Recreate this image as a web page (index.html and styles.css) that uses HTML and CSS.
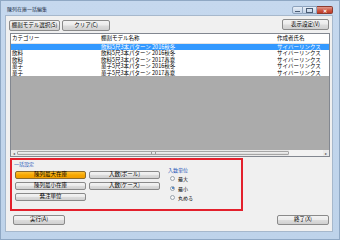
FILE: index.html
```html
<!DOCTYPE html>
<html lang="ja">
<head>
    <meta charset="UTF-8">
    <title>陳列在庫一括編集</title>
    <link rel="stylesheet" href="styles.css">
</head>
<body>
    <div class="window">
        <!-- タイトルバー -->
        <div class="titlebar">
            <span class="title">陳列在庫一括編集</span>
            <div class="caption-buttons">
                <span class="cap cap-min"><i></i></span>
                <span class="cap cap-max"><i></i></span>
                <span class="cap cap-close">✕</span>
            </div>
        </div>

        <div class="client">
            <!-- ツールバー -->
            <div class="toolbar">
                <button class="btn btn-model">棚割モデル選択(S)</button>
                <button class="btn btn-clear">クリア(C)</button>
                <button class="btn btn-view">表示設定(V)</button>
            </div>

            <!-- 一覧 -->
            <div class="grid">
                <div class="row head">
                    <span class="c1">カテゴリー</span>
                    <span class="c2">棚割モデル名称</span>
                    <span class="c3">作成者氏名</span>
                </div>
                <div class="row selected">
                    <span class="c1"></span>
                    <span class="c2">飲料5尺3本パターン 2016秋冬</span>
                    <span class="c3">サイバーリンクス</span>
                </div>
                <div class="row">
                    <span class="c1">飲料</span>
                    <span class="c2">飲料5尺3本パターン 2016秋冬</span>
                    <span class="c3">サイバーリンクス</span>
                </div>
                <div class="row">
                    <span class="c1">飲料</span>
                    <span class="c2">飲料5尺3本パターン 2017春夏</span>
                    <span class="c3">サイバーリンクス</span>
                </div>
                <div class="row">
                    <span class="c1">菓子</span>
                    <span class="c2">菓子5尺3本パターン 2016秋冬</span>
                    <span class="c3">サイバーリンクス</span>
                </div>
                <div class="row">
                    <span class="c1">菓子</span>
                    <span class="c2">菓子5尺3本パターン 2017春夏</span>
                    <span class="c3">サイバーリンクス</span>
                </div>
                <div class="empty"></div>
                <div class="hscroll">
                    <span class="arrow">◂</span>
                    <span class="thumb"><i></i></span>
                    <span class="track"></span>
                    <span class="arrow">▸</span>
                </div>
            </div>

            <!-- 一括設定 -->
            <div class="group">
                <div class="group-left">
                    <div class="group-title">一括設定</div>
                    <div class="set-buttons">
                        <button class="btn btn-set active">陳列最大在庫</button>
                        <button class="btn btn-set">入数(ボール)</button>
                        <button class="btn btn-set">陳列最小在庫</button>
                        <button class="btn btn-set">入数(ケース)</button>
                        <button class="btn btn-set">発注単位</button>
                    </div>
                </div>
                <div class="group-right">
                    <div class="unit-title">入数単位</div>
                    <label class="radio"><span class="dot"></span>最大</label>
                    <label class="radio"><span class="dot checked"></span>最小</label>
                    <label class="radio"><span class="dot"></span>丸める</label>
                </div>
            </div>

            <!-- フッター -->
            <div class="footer">
                <button class="btn btn-foot">実行(A)</button>
                <button class="btn btn-foot">終了(X)</button>
            </div>
        </div>
    </div>
</body>
</html>
```

FILE: styles.css
```css
body {
    margin: 0;
    padding: 0;
    font-family: "Noto Sans CJK JP", "Noto Sans", sans-serif;
    font-size: 5.5px;
    color: #000;
}

.window {
    width: 340px;
    height: 240px;
    display: flex;
    flex-direction: column;
    background: linear-gradient(to bottom, #c5d8ee 0%, #bed3ea 100%);
    box-sizing: border-box;
    border: 1px solid #8fa8c4;
}

/* タイトルバー */
.titlebar {
    height: 14px;
    display: flex;
    align-items: center;
    padding-left: 6px;
}

.title {
    font-size: 5px;
    color: #1b2c44;
    flex: 1;
}

.caption-buttons {
    display: flex;
    align-self: flex-start;
    margin-top: 5px;
    margin-right: 6px;
}

.cap {
    height: 8px;
    box-sizing: border-box;
    border: 1px solid #8ea3bd;
    background: linear-gradient(to bottom, #e7eef7 0%, #d3dfee 50%, #c3d3e7 100%);
    display: flex;
    align-items: center;
    justify-content: center;
}

.cap-min {
    width: 11px;
    border-radius: 2px 0 0 2px;
}

.cap-min i {
    width: 5px;
    height: 1px;
    margin-top: 2px;
    background: #4b5d75;
}

.cap-max {
    width: 14px;
    border-left: none;
}

.cap-max i {
    width: 5px;
    height: 3px;
    border: 1px solid #4b5d75;
}

.cap-close {
    width: 16px;
    border-left: none;
    border-color: #8b3b30;
    border-radius: 0 2px 2px 0;
    background: linear-gradient(to bottom, #e19b8d 0%, #cf5c48 50%, #c03a26 100%);
    color: #fff;
    font-size: 5px;
    font-weight: bold;
}

/* クライアント領域 */
.client {
    flex: 1;
    margin: 0 6px 7px 4px;
    background: #f0f0f0;
    border: 1px solid #a6b8cc;
    padding: 3px 2px 0 4px;
    display: flex;
    flex-direction: column;
}

.btn {
    font-family: inherit;
    font-size: 5.5px;
    color: #000;
    padding: 0;
    box-sizing: border-box;
    border: 1px solid #8a8a8a;
    border-radius: 2px;
    background: linear-gradient(to bottom, #f3f3f3 0%, #ebebeb 48%, #dcdcdc 52%, #d0d0d0 100%);
    line-height: 1;
}

.toolbar {
    display: flex;
    align-items: flex-start;
    height: 12px;
}

.btn-model {
    width: 51px;
    height: 11px;
    margin-top: 1px;
    margin-left: -1px;
}

.btn-clear {
    width: 48px;
    height: 11px;
    margin-top: 1px;
    margin-left: 2px;
}

.btn-view {
    width: 47px;
    height: 11px;
    margin-left: auto;
    margin-right: 1px;
}

/* 一覧 */
.grid {
    margin-top: 2px;
    height: 124px;
    border: 1px solid #828790;
    box-sizing: border-box;
    display: flex;
    flex-direction: column;
    background: #ababab;
}

.row {
    display: flex;
    height: 6.5px;
    line-height: 6.5px;
    background: #fff;
    white-space: nowrap;
}

.row.head {
    height: 8.5px;
    line-height: 8.5px;
    border-bottom: 0.5px solid #e4e4e4;
}

.row.selected {
    background: #3399ff;
    color: #fff;
}

.c1 {
    width: 89px;
    padding-left: 1px;
}

.c2 {
    width: 176px;
}

.c3 {
    flex: 1;
}

.empty {
    flex: 1;
}

.hscroll {
    height: 6px;
    display: flex;
    align-items: center;
    background: #e9e9e9;
    font-size: 4px;
    color: #555;
}

.arrow {
    width: 6px;
    text-align: center;
}

.thumb {
    width: 272px;
    height: 4px;
    box-sizing: border-box;
    border: 1px solid #a5a5a5;
    border-radius: 1px;
    background: linear-gradient(to bottom, #f2f2f2, #dadada);
    display: flex;
    justify-content: center;
}

.thumb i {
    width: 3px;
    border-left: 1px solid #999;
    border-right: 1px solid #999;
}

.track {
    flex: 1;
    height: 6px;
    background: #f2f2f2;
}

/* 一括設定 */
.group {
    margin-top: 1px;
    width: 233px;
    height: 53px;
    box-sizing: border-box;
    border: 2px solid #e3202c;
    padding-left: 2px;
    display: flex;
}

.group-title {
    color: #1a52b6;
    line-height: 8px;
    font-size: 5px;
}

.set-buttons {
    margin-top: 3px;
    margin-left: 1px;
    display: grid;
    grid-template-columns: 71px 71px;
    column-gap: 3px;
    row-gap: 3px;
}

.btn-set {
    height: 8px;
}

.btn-set.active {
    border-color: #8a6a2c;
    background: linear-gradient(to bottom, #ffc236 0%, #f7a800 50%, #f29e00 100%);
}

.group-right {
    margin-left: 8px;
    padding-top: 6px;
    display: flex;
    flex-direction: column;
}

.unit-title {
    color: #1a52b6;
    font-size: 5px;
    line-height: 8px;
}

.radio {
    display: flex;
    align-items: center;
    line-height: 9.5px;
    height: 9.5px;
    padding-left: 2px;
    font-size: 5px;
}

.dot {
    width: 5px;
    height: 5px;
    box-sizing: border-box;
    border: 1px solid #9aa4ad;
    border-radius: 50%;
    background: #f6f6f6;
    margin-right: 3px;
    display: flex;
    align-items: center;
    justify-content: center;
}

.dot.checked::after {
    content: '';
    width: 2px;
    height: 2px;
    border-radius: 50%;
    background: #2a6bb8;
}

/* フッター */
.footer {
    margin-top: 4px;
    display: flex;
    justify-content: space-between;
    padding: 0 1px 0 3px;
}

.btn-foot {
    width: 52px;
    height: 10px;
}
```
